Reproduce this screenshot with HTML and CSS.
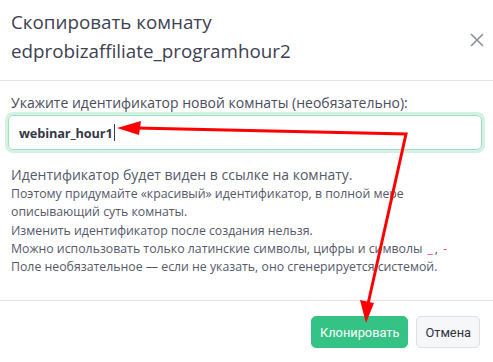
FILE: index.html
```html
<!DOCTYPE html>
<html>
<head>
    <link rel="stylesheet" href="styles.css">
</head>
<body>
    <div class="modal">
        <div class="modal-header">
            <h1 class="modal-title">Скопировать комнату<br>edprobizaffiliate_programhour2</h1>
            <button class="close-btn" aria-label="Закрыть">
                <svg width="16" height="16" viewBox="0 0 16 16">
                    <path d="M2 2 L14 14 M14 2 L2 14" stroke="#8a8f99" stroke-width="1.6" fill="none"/>
                </svg>
            </button>
        </div>
        <div class="modal-body">
            <label class="field-label">Укажите идентификатор новой комнаты (необязательно):</label>
            <div class="input-wrap">
                <span class="input-id">webinar_hour1</span><span class="caret"></span>
            </div>
            <div class="hint">
                <p class="hint-main">Идентификатор будет виден в ссылке на комнату.</p>
                <p>Поэтому придумайте «красивый» идентификатор, в полной мере описывающий суть комнаты.</p>
                <p>Изменить идентификатор после создания нельзя.</p>
                <p>Можно использовать только латинские символы, цифры и символы <code>_</code>, <code>-</code></p>
                <p>Поле необязательное — если не указать, оно сгенерируется системой.</p>
            </div>
        </div>
        <div class="modal-footer">
            <button class="btn btn-primary">Клонировать</button>
            <button class="btn btn-default">Отмена</button>
        </div>
    </div>

    <svg class="arrows" width="493" height="362" viewBox="0 0 493 362">
        <polyline points="136,128 406,134 368,304" stroke="#ff0000" stroke-width="3" fill="none" stroke-linejoin="miter"/>
        <polygon points="117,128 141,121 139,135" fill="#ff0000"/>
        <polygon points="366,323 360,300 374,303" fill="#ff0000"/>
    </svg>
</body>
</html>
```

FILE: styles.css
```css
* {
    box-sizing: border-box;
}

body {
    margin: 0;
    background: #fff;
    font-family: 'Open Sans', sans-serif;
    color: #3d4150;
}

.modal {
    width: 493px;
    height: 362px;
    display: flex;
    flex-direction: column;
}

.modal-header {
    display: flex;
    align-items: center;
    justify-content: space-between;
    padding: 12px 8px 18px 11px;
    border-bottom: 1px solid #e3e5ea;
    height: 81px;
}

.modal-title {
    margin: 0;
    font-size: 18.8px;
    font-weight: 400;
    line-height: 29px;
    color: #3d4150;
}

.close-btn {
    background: none;
    border: 0;
    padding: 0;
    margin-top: 6px;
    width: 16px;
    height: 16px;
}

.modal-body {
    padding: 12px 11px 0 8px;
    flex: 1;
    border-bottom: 1px solid #e3e5ea;
}

.field-label {
    display: block;
    padding-left: 3px;
    font-size: 14px;
    line-height: 20px;
    color: #4a4e5c;
}

.input-wrap {
    margin-top: 2px;
    height: 35px;
    border: 1px solid #9ee0bf;
    border-radius: 5px;
    box-shadow: 0 0 0 3px #d3f2e2;
    display: flex;
    align-items: center;
}

.input-id {
    font-weight: 700;
    font-size: 12.8px;
    letter-spacing: -0.15px;
    color: #353848;
    padding-left: 10px;
}

.caret {
    width: 1px;
    height: 17px;
    margin-left: 1px;
    background: #353848;
}

.hint {
    padding: 15px 0 0 3px;
    color: #555968;
    font-size: 12.3px;
    line-height: 18.3px;
}

.hint p {
    margin: 0;
}

.hint .hint-main {
    font-size: 14px;
    line-height: 20px;
    margin-bottom: 0;
}

.hint code {
    font-family: 'Open Sans', sans-serif;
    color: #e83e8c;
    font-size: 12px;
    padding: 0 2px;
}

.modal-footer {
    display: flex;
    justify-content: flex-end;
    gap: 8px;
    padding: 15px 13px 13px;
    height: 61px;
}

.btn {
    height: 32px;
    border-radius: 5px;
    font-family: Roboto, sans-serif;
    font-size: 12.8px;
    padding: 0 8px;
    cursor: pointer;
}

.btn-primary {
    background: #34c384;
    border: 1px solid #34c384;
    color: #fff;
}

.btn-default {
    background: #f6f7f9;
    border: 1px solid #dcdfe4;
    color: #2f3240;
}

.arrows {
    position: absolute;
    left: 0;
    top: 0;
    pointer-events: none;
}
```
